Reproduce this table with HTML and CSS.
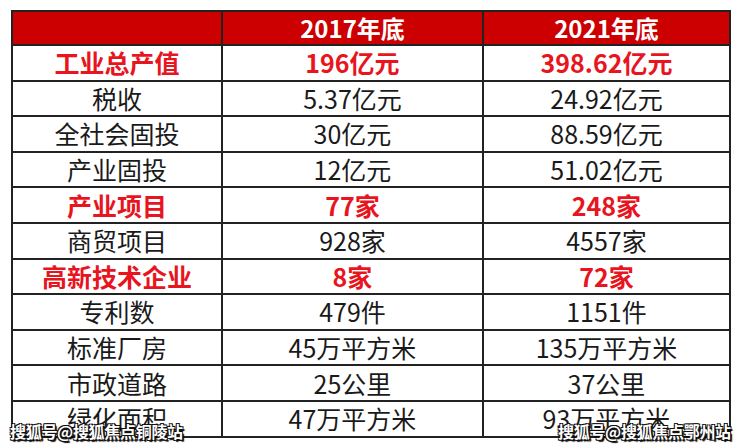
FILE: index.html
```html
<!DOCTYPE html>
<html lang="zh">
<head>
<meta charset="utf-8">
<link rel="stylesheet" href="styles.css">
</head>
<body>
<div class="page">
  <table class="data">
    <colgroup>
      <col class="c1"><col class="c2"><col class="c3">
    </colgroup>
    <thead>
      <tr class="head"><th></th><th>2017年底</th><th>2021年底</th></tr>
    </thead>
    <tbody>
      <tr class="hl"><td>工业总产值</td><td>196亿元</td><td>398.62亿元</td></tr>
      <tr><td>税收</td><td>5.37亿元</td><td>24.92亿元</td></tr>
      <tr><td>全社会固投</td><td>30亿元</td><td>88.59亿元</td></tr>
      <tr><td>产业固投</td><td>12亿元</td><td>51.02亿元</td></tr>
      <tr class="hl"><td>产业项目</td><td>77家</td><td>248家</td></tr>
      <tr><td>商贸项目</td><td>928家</td><td>4557家</td></tr>
      <tr class="hl"><td>高新技术企业</td><td>8家</td><td>72家</td></tr>
      <tr><td>专利数</td><td>479件</td><td>1151件</td></tr>
      <tr><td>标准厂房</td><td>45万平方米</td><td>135万平方米</td></tr>
      <tr><td>市政道路</td><td>25公里</td><td>37公里</td></tr>
      <tr><td>绿化面积</td><td>47万平方米</td><td>93万平方米</td></tr>
    </tbody>
  </table>
  <div class="mark mark-left">搜狐号@搜狐焦点铜陵站</div>
  <div class="mark mark-right">搜狐号@搜狐焦点鄂州站</div>
</div>
</body>
</html>
```
FILE: styles.css
```css
html, body {
  margin: 0;
  padding: 0;
  background: #ffffff;
}
body {
  width: 740px;
  height: 448px;
  overflow: hidden;
  font-family: "Noto Sans CJK SC", "Noto Sans", sans-serif;
}
.page {
  position: relative;
  width: 740px;
  height: 448px;
  padding: 10px 0 0 11px;
  box-sizing: border-box;
}
.data {
  border-collapse: collapse;
  table-layout: fixed;
  width: 718px;
}
.c1 { width: 210px; }
.c2 { width: 261px; }
.c3 { width: 247px; }
.data th,
.data td {
  border: 2px solid #222222;
  padding: 0;
  text-align: center;
  vertical-align: middle;
  font-size: 25px;
  line-height: 1;
  color: #1a1a1a;
  white-space: nowrap;
}
.head th {
  height: 32px;
  background: #cc0000;
  color: #ffffff;
  font-weight: 700;
  font-size: 24px;
}
.data td {
  height: 33.6px;
  font-weight: 400;
}
.hl td {
  color: #e8141e;
  font-weight: 700;
}
.mark {
  position: absolute;
  top: 421px;
  font-size: 16px;
  font-weight: 700;
  line-height: 20px;
  color: #ffffff;
  letter-spacing: -0.3px;
  text-shadow: 1px 1px 0 #111, -1px -1px 0 #111, 1px -1px 0 #111, -1px 1px 0 #111, 2px 2px 1px #000;
}
.mark-left { left: 10px; }
.mark-right { left: 558px; }
```
